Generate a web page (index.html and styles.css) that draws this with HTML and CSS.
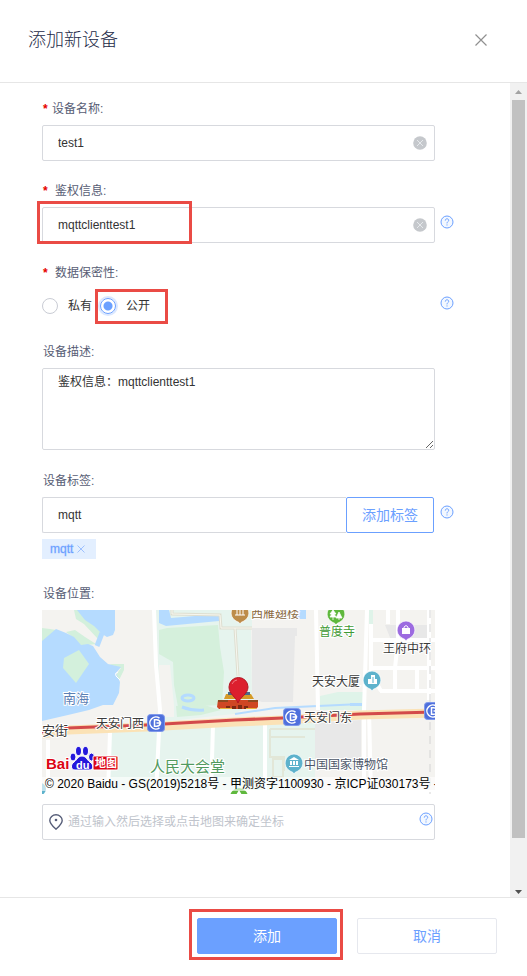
FILE: index.html
```html
<!DOCTYPE html>
<html lang="zh-CN">
<head>
<meta charset="utf-8">
<meta name="viewport" content="width=device-width, initial-scale=1">
<title>添加新设备</title>
<link rel="stylesheet" href="styles.css">
</head>
<body>
<svg class="sprite" aria-hidden="true">
  <symbol id="i-help" viewBox="0 0 14 14">
    <circle cx="7" cy="7" r="6" fill="#f3f8ff" stroke="#6ba0ff"/>
    <path d="M5.3 5.6C5.3 4.4 6 3.8 7 3.8s1.7.6 1.7 1.6C8.700 6.600 7 6.600 7 8.400M7 9.400v1.100" fill="none" stroke="#6ba0ff"/>
  </symbol>
  <symbol id="i-clear" viewBox="0 0 14 14">
    <circle cx="7" cy="7" r="6.800" fill="#c5c8cc"/>
    <path d="M4 4l6 6M10 4l-6 6" stroke="#e6e9ec" fill="none"/>
  </symbol>
  <symbol id="i-metro" viewBox="0 0 18 18">
    <rect x=".5" y=".5" width="17" height="17" rx="3" fill="#4f70dc" stroke="#7f98ea"/>
    <path d="M12.500 4.200A6 6 0 1 0 12.500 13.800" fill="none" stroke="#fff" stroke-width="1.500"/>
    <path d="M13.500 9a4 4 0 0 0-4-3.200H7.500v6.400h2A4 4 0 0 0 13.500 9H9.500" fill="none" stroke="#fff" stroke-width="1.500"/>
  </symbol>
  <symbol id="i-poi" viewBox="0 0 20 22">
    <path d="M10 1a9 9 0 0 1 4 17l-3 1.500L10 21l-1-1.500L6 18A9 9 0 0 1 10 1z" fill="currentColor" stroke="#fff" stroke-opacity=".7"/>
  </symbol>
</svg>

<div class="dialog" role="dialog" aria-labelledby="title">
  <header class="dialog-head">
    <h1 id="title">添加新设备</h1>
    <button class="icon-btn" type="button" aria-label="关闭">
      <svg width="14" height="14" viewBox="0 0 14 14"><path d="M1.500 1.500l11 11M12.500 1.500l-11 11" stroke="#909090" stroke-width="1.200" fill="none"/></svg>
    </button>
  </header>

  <main class="dialog-body">
    <form class="form" id="device">
      <div class="field">
        <label class="label" for="name"><span class="star">*</span>设备名称:</label>
        <div class="control">
          <input class="input" id="name" type="text" value="test1">
          <button class="icon-btn clear" type="button" aria-label="清除"><svg width="14" height="14"><use href="#i-clear"/></svg></button>
        </div>
      </div>

      <div class="field">
        <label class="label" for="auth"><span class="star wide">*</span>鉴权信息:</label>
        <div class="control marked marked-auth">
          <input class="input" id="auth" type="text" value="mqttclienttest1">
          <button class="icon-btn clear" type="button" aria-label="清除"><svg width="14" height="14"><use href="#i-clear"/></svg></button>
        </div>
        <button class="icon-btn help" type="button" aria-label="帮助"><svg width="14" height="14"><use href="#i-help"/></svg></button>
      </div>

      <div class="field" role="radiogroup" aria-labelledby="privacy">
        <div class="label" id="privacy"><span class="star wide">*</span>数据保密性:</div>
        <div class="radios">
          <label class="radio"><input type="radio" name="privacy" value="private">私有</label>
          <label class="radio marked marked-radio"><input type="radio" name="privacy" value="public" checked>公开</label>
        </div>
        <button class="icon-btn help" type="button" aria-label="帮助"><svg width="14" height="14"><use href="#i-help"/></svg></button>
      </div>

      <div class="field">
        <label class="label" for="desc">设备描述:</label>
        <textarea class="input textarea" id="desc">鉴权信息：mqttclienttest1</textarea>
      </div>

      <div class="field">
        <label class="label" for="tag">设备标签:</label>
        <div class="control group">
          <input class="input" id="tag" type="text" value="mqtt">
          <button class="addon" type="button">添加标签</button>
        </div>
        <button class="icon-btn help" type="button" aria-label="帮助"><svg width="14" height="14"><use href="#i-help"/></svg></button>
        <div class="tags">
          <span class="tag">mqtt<button class="icon-btn" type="button" aria-label="移除 mqtt"><svg width="8" height="8" viewBox="0 0 8 8"><path d="M.5.5l7 7M7.500.5l-7 7" stroke="#9dc0ff" fill="none"/></svg></button></span>
        </div>
      </div>

      <div class="field">
        <label class="label" for="place">设备位置:</label>
        <div class="map">
          <svg class="map-canvas" viewBox="0 0 393 184" preserveAspectRatio="xMidYMid slice" role="img" aria-label="地图">
            <rect width="393" height="184" fill="#f4f3f0"/>
            <!-- lakes and shore -->
            <path d="M0 18l8 1 6 1-14 12zM32 0h5l23 20 2 5-6 4-14-15-8-5zM24 22l9-2 10 7 11 7-8 1-7 2-7-9zM67 54l15 0 0 6-5 10-3-5 5-7z" fill="#d3f0dc"/>
            <path d="M35 0h38v20l-2 5-6 2-5-3-8-8-9-6z" fill="#b5dbff"/>
            <path d="M0 31l14-12 10 4 8 4 7 8 7-1 5 2 7 11 8 7 13 3-5 6 4 9-1 11-6 12-10 0-14 5-21 5-26 6z" fill="#b5dbff"/>
            <path d="M55 36l5-13" stroke="#b5dbff" stroke-width="5"/>
            <path d="M37 40l10 14-13 19-13-15 1-10z" fill="#d3f0dc"/>
            <path d="M76 62q-4 1-2 4l4 4" fill="none" stroke="#fff"/>
            <!-- parks -->
            <path d="M114 0h96v18h-1l1 77-18 9-74 8z" fill="#e6f4ee"/>
            <path d="M117 20l8-2 51-3 2 22 4 25-2 33-44 2-4-22-1-23-14-8z" fill="#d5f0dc"/>
            <path d="M117 55h11l4 40v12h-14z" fill="#f4f3f0"/>
            <path d="M117 0h10l2 8 48-4v7l-53 5-7-3z" fill="#b5dbff"/>
            <ellipse cx="146" cy="88" rx="6" ry="3" fill="none" stroke="#b5dbff" stroke-width="3"/>
            <path d="M130 0v4l48 1 1 13h31M193 18l3 48" fill="none" stroke="#deded0" stroke-width="3"/>
            <path d="M130 0v4l48 1 1 13h31M193 18l3 48" fill="none" stroke="#f7f7ef"/>
            <path d="M134 96l25-2 20 6-20 5-24 2z" fill="#d5f0dc"/>
            <path d="M140 97q10 4 22 3" fill="none" stroke="#b5dbff" stroke-width="3"/>
            <path d="M67 121l206-10v73H67z" fill="#e6f4ee"/>
            <path d="M278 86l18-4h25v18h-43zM327 0h4v14h-4z" fill="#dff3e9"/>
            <path d="M210 18h45v8h-2l-2 66h-31l-10-3z" fill="#e8e8e8"/>
            <path d="M273 113l46-3v47h-46zM343 15h42v15h-36z" fill="#e8e8e8"/>
            <path d="M243 0h21v9h-21zM308 93h12v3h-12z" fill="#b5dbff"/>
            <path d="M193 104l40-6 86-4" fill="none" stroke="#b5dbff" stroke-width="2"/>
            <!-- streets -->
            <g fill="none" stroke="#fff" stroke-width="4">
              <path d="M112 0l2 55 4 45-4 84M274 0l2 100M325 0l-3 100v84M329 14v46M6 130v54M68 122l-2 62M171 115l-2 69M223 112v72M327 100l2 84"/>
              <path d="M327 30h66M327 58h66M338 81h55M356 0v30l-3 28v23M375 58v23M387 0v90M346 0v14M0 182h393M327 60l12 21"/>
            </g>
            <path d="M228 119h45M228 127h35M228 119v28h14v14M231 149h10v18h-10z" fill="none" stroke="#e2e7d8" stroke-width="2"/>
            <path d="M388 0v184" fill="none" stroke="#d4d4d4" stroke-dasharray="8 6"/>
            <!-- main avenue -->
            <path d="M0 124l26-4 78-3 89-5 48-2 77-5 75-2" fill="none" stroke="#fbe2b6" stroke-width="9"/>
            <path d="M0 122l26-4 78-3 89-5 48-2 77-4 75-2" fill="none" stroke="#d34a4a" stroke-width="3"/>
            <!-- points of interest -->
            <svg x="188" y="-7" width="20" height="22" color="#bd8c4a"><use href="#i-poi"/></svg>
            <path d="M193 5h10M195 0v5M198 0v5M201 0v5" stroke="#fff" fill="none"/>
            <svg x="284" y="-6" width="20" height="22" color="#5fb83d"><use href="#i-poi"/></svg>
            <path d="M291 0l3 4h-2l2 3h-6l2-3h-2zM297 2l3 6h-6zM291 7v3M297 8v2" fill="#fff" stroke="#fff" stroke-width=".8"/>
            <svg x="354" y="10" width="20" height="22" color="#9c6be0"><use href="#i-poi"/></svg>
            <path d="M360 18h8v6h-8z" fill="#fff"/><path d="M362 18v-1q2-3 4 0v1" fill="none" stroke="#fff"/>
            <svg x="320" y="60" width="20" height="22" color="#5db2cc"><use href="#i-poi"/></svg>
            <path d="M326 74v-5h3v-4h4v4h2v5z" fill="#fff"/><path d="M331 67v6" stroke="#5db2cc"/>
            <svg x="242" y="143" width="20" height="22" color="#5db2cc"><use href="#i-poi"/></svg>
            <path d="M247 150l5-3 5 3zM248 151h2v4h-2zM251 151h2v4h-2zM254 151h2v4h-2zM247 156h10v1h-10z" fill="#fff"/>
            <circle cx="197" cy="187" r="9" fill="#5fb83d"/>
            <path d="M197 180l3 5h-6z" fill="#fff"/>
            <circle cx="-2" cy="179" r="6" fill="#5db2cc"/>
            <use href="#i-metro" x="105" y="104" width="18" height="18"/>
            <use href="#i-metro" x="241" y="98" width="18" height="18"/>
            <use href="#i-metro" x="382" y="92" width="18" height="18"/>
            <!-- gate and marker -->
            <path d="M184 84h25l3 5h-30z" fill="#d59a28"/>
            <path d="M186 82h22v3h-22z" fill="#4a6b8a"/>
            <path d="M176 90h40v7l-2 2h-37l-2-2z" fill="#cf4724"/>
            <path d="M176 90h10v2h-10zM206 90h10v2h-10z" fill="#8e4a20"/>
            <path d="M184 96h4v3h-4zM190 96h4v3h-4zM196 95h4v4h-4zM202 96h4v3h-4z" fill="#7d2a14"/>
            <path d="M178 98h12v1h-12zM204 98h10v1h-10z" fill="#e8b23c"/>
            <path d="M196 93c-2-6-9-9-9-16a9.500 9.500 0 0 1 19 0c0 7-8 10-10 16z" fill="#dc1f2e" stroke="#b31522"/>
            <path d="M190 74q2-4 5-4" fill="none" stroke="#ef7780"/>
            <!-- place names -->
            <g class="place">
              <text x="209" y="8" fill="#8a6a42">西雁翅楼</text>
              <text x="277" y="26" fill="#3f9a35">普度寺</text>
              <text x="341" y="43">王府中环</text>
              <text x="270" y="76">天安大厦</text>
              <text x="54" y="118">天安门西</text>
              <text x="262" y="112">天安门东</text>
              <text x="262" y="159" fill="#4c5668">中国国家博物馆</text>
              <text class="place-m" x="0" y="125">安街</text>
              <text class="place-m" x="21" y="93" fill="#5b80b5">南海</text>
              <text class="place-l" x="108" y="162" fill="#529a5e">人民大会堂</text>
            </g>
            <!-- map provider logo -->
            <g class="logo">
              <text x="4" y="159" fill="#dc0514">Bai</text>
              <g fill="#2418dc" stroke="#fff" stroke-width="1">
                <path d="M40 146c-4 0-5 4-8 6-4 3-3 8 1 8h14c5 0 5-5 1-8-3-2-4-6-8-6z"/>
                <ellipse cx="31" cy="147" rx="3" ry="4"/>
                <ellipse cx="36.500" cy="141" rx="3" ry="4.500"/>
                <ellipse cx="43.500" cy="141" rx="3" ry="4.500"/>
                <ellipse cx="49.500" cy="147" rx="3" ry="4"/>
              </g>
              <text class="logo-du" x="34" y="159">du</text>
              <rect x="51" y="146" width="25" height="14" rx="1" fill="#dc0514" stroke="#fff"/>
              <text class="logo-map" x="53" y="157">地图</text>
            </g>
          </svg>
          <div class="map-copy">© 2020 Baidu - GS(2019)5218号 - 甲测资字1100930 - 京ICP证030173号 -</div>
        </div>
        <div class="input locate">
          <svg width="14" height="16" viewBox="0 0 14 16" aria-hidden="true"><path d="M7 15.200C4 12.500.8 9.800.8 6.500a6.200 5.700 0 0 1 12.400 0C13.200 9.800 10 12.500 7 15.200z" fill="none" stroke="#565d78" stroke-width="1.400"/><circle cx="7" cy="6" r="1.300" fill="#565d78"/></svg>
          <input id="place" type="text" placeholder="通过输入然后选择或点击地图来确定坐标">
          <button class="icon-btn help" type="button" aria-label="帮助"><svg width="14" height="14"><use href="#i-help"/></svg></button>
        </div>
      </div>
    </form>

    <div class="scrollbar" aria-hidden="true">
      <svg width="17" height="17" viewBox="0 0 17 17"><path d="M5 11h7L8.500 7z" fill="#a3a3a3"/></svg>
      <div class="thumb"></div>
      <svg width="17" height="17" viewBox="0 0 17 17"><path d="M5 10h7l-3.500 4z" fill="#505050"/></svg>
    </div>
  </main>

  <footer class="dialog-foot">
    <div class="marked marked-submit"><button class="btn primary" type="submit" form="device">添加</button></div>
    <button class="btn" type="button">取消</button>
  </footer>
</div>
</body>
</html>
```

FILE: styles.css
```css
*,
*::after {
  box-sizing: border-box;
}

body {
  margin: 0;
  background: #fff;
  color: #333;
  font: 12px/16px "Liberation Sans", "Noto Sans CJK SC", sans-serif;
}

button,
input,
textarea {
  margin: 0;
  font: inherit;
  color: inherit;
}

svg {
  display: block;
}

.sprite {
  position: absolute;
  width: 0;
  height: 0;
}

.icon-btn {
  display: block;
  padding: 0;
  border: 0;
  background: none;
  cursor: pointer;
}

.dialog {
  display: flex;
  flex-direction: column;
  min-height: 100vh;
}

.dialog-head {
  display: flex;
  align-items: center;
  justify-content: space-between;
  height: 83px;
  padding: 0 39px 2px 28px;
  border-bottom: 1px solid #e6e6e6;
}

h1 {
  margin: 0;
  color: #252b48;
  font-size: 18px;
  font-weight: 300;
  line-height: 24px;
}

.dialog-body {
  display: flex;
  flex: 1;
}

.form {
  flex: 1;
  min-width: 0;
  padding: 10px 56px 57px 42px;
}

.field {
  display: grid;
  grid-template-columns: minmax(0, 1fr) 14px;
  column-gap: 5px;
  margin-bottom: 14px;
}

.field:last-child {
  margin-bottom: 0;
}

.label {
  grid-column: 1 / -1;
  padding-left: 1px;
  color: #575d75;
  line-height: 32px;
}

.star {
  display: inline-block;
  width: 9px;
  color: #e60000;
  font-weight: bold;
}

.star.wide {
  width: 12px;
}

.control {
  position: relative;
  display: flex;
}

.input {
  flex: 1;
  width: 100%;
  min-width: 0;
  height: 36px;
  padding: 0 15px;
  border: 1px solid #d7d9de;
  border-radius: 2px;
  background: #fff;
  outline: 0;
}

.clear {
  position: absolute;
  top: 11px;
  right: 8px;
}

.help {
  align-self: center;
  padding-bottom: 6px;
}

.radios {
  display: flex;
  align-items: center;
  gap: 8px;
  height: 33px;
}

.radio {
  display: flex;
  align-items: center;
  gap: 10px;
}

.radio input {
  width: 16px;
  height: 16px;
  border: 1px solid #c9ccd4;
  border-radius: 50%;
  appearance: none;
}

.radio input:checked {
  border-color: #6ba0ff;
  background: radial-gradient(circle, #6ba0ff 4px, #fff 5px);
  box-shadow: 0 0 0 2px #dbe8ff;
}

.textarea {
  display: block;
  height: 82px;
  margin-bottom: 1px;
  padding: 5px 15px;
  resize: vertical;
}

.group .input {
  border-right: 0;
  border-radius: 2px 0 0 2px;
}

.addon {
  width: 88px;
  height: 36px;
  margin-right: 1px;
  padding: 0;
  border: 1px solid #6ba0ff;
  border-radius: 2px;
  background: #fff;
  color: #6ba0ff;
  font-size: 14px;
}

.tags {
  display: flex;
  grid-column: 1 / -1;
  height: 31px;
  padding-top: 6px;
}

.tag {
  display: flex;
  align-items: center;
  gap: 4px;
  height: 20px;
  padding: 0 11px 0 8px;
  background: #e3efff;
  color: #6ba0ff;
  -webkit-text-stroke: 1px rgba(107, 160, 255, 0.3);
}

.map {
  position: relative;
  height: 184px;
  margin-bottom: 10px;
  overflow: hidden;
}

.map-canvas {
  width: 100%;
  height: 100%;
}

.map-copy {
  position: absolute;
  right: 0;
  bottom: 3px;
  left: 0;
  padding-left: 3px;
  overflow: hidden;
  background: rgba(255, 255, 255, 0.6);
  color: #000;
  line-height: 14px;
  white-space: nowrap;
}

.place {
  fill: #3a3a3a;
  stroke: #fff;
  stroke-width: 2px;
  paint-order: stroke;
  font-size: 12px;
}

.place-m {
  font-size: 13px;
}

.place-l {
  font-size: 15px;
}

.logo {
  font-size: 15px;
  font-weight: bold;
}

.logo text {
  stroke: #fff;
  stroke-width: 2px;
  paint-order: stroke;
}

.logo .logo-du {
  fill: #fff;
  stroke: none;
  font-size: 11px;
}

.logo .logo-map {
  fill: #fff;
  stroke: none;
  font-size: 11px;
}

.locate {
  display: flex;
  grid-column: 1;
  align-items: center;
  gap: 5px;
  padding: 0 1px 0 6px;
}

.locate input {
  flex: 1;
  min-width: 0;
  padding: 0;
  border: 0;
  outline: 0;
  background: none;
}

.locate input::placeholder {
  color: #c0c4cc;
}

.scrollbar {
  display: flex;
  flex-direction: column;
  width: 17px;
  background: #f1f1f1;
}

.thumb {
  flex: 1;
  margin: 0 2px 42px;
  background: #c1c1c1;
}

.dialog-foot {
  display: flex;
  justify-content: flex-end;
  gap: 20px;
  padding: 20px 30px 22px;
  border-top: 1px solid #e6e6e6;
}

.btn {
  display: block;
  width: 140px;
  height: 36px;
  padding: 0;
  border: 1px solid #e6e8ee;
  border-radius: 2px;
  background: #fff;
  color: #6ba0ff;
  font-size: 14px;
}

.btn.primary {
  border-color: #6ba0ff;
  background: #6ba0ff;
  color: #fff;
}

/* highlight frames drawn over the controls */
.marked {
  position: relative;
}

.marked::after {
  position: absolute;
  border: 3px solid #ea4b45;
  content: "";
  pointer-events: none;
}

.marked-auth::after {
  top: -6px;
  left: -5px;
  width: 155px;
  height: 43px;
}

.marked-radio::after {
  inset: -9px -18px -10px -5px;
}

.marked-submit::after {
  inset: -9px -6px -6px -8px;
}
```
